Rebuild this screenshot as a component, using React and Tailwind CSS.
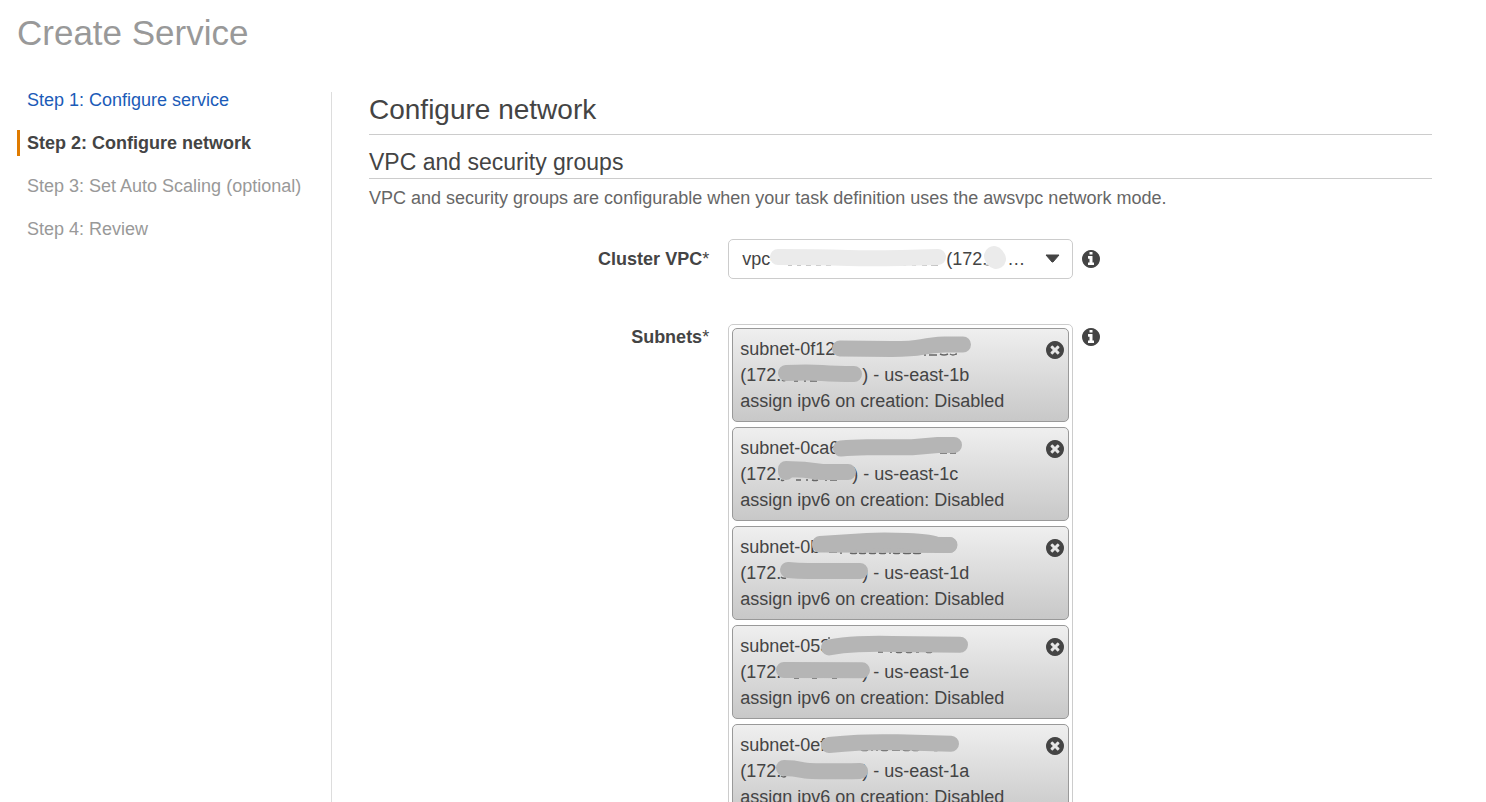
import React from "react";

const steps = [
  { label: "Step 1: Configure service", state: "done" },
  { label: "Step 2: Configure network", state: "current" },
  { label: "Step 3: Set Auto Scaling (optional)", state: "todo" },
  { label: "Step 4: Review", state: "todo" },
];

// `strokes` are the marker lines over the masked parts; `marks` are the glyph edges left visible below them.
const subnets = [
  {
    id: "subnet-0f12",
    zone: "us-east-1b",
    gap: "w-[81px]",
    strokes: ["M108 20.5L160 21Q180 21 190 19T213 16.5L231 16.5", "M54 45Q76 44 90 45T122 46"],
    marks: "M100 26h1.5M192 27h2M197 27h8M208 26q4 2 8 0M218 26q3 2 6 0v1M50 52q2 1.5 4 0M62 53h4M72 53h2M78 53h7",
  },
  {
    id: "subnet-0ca6",
    zone: "us-east-1c",
    gap: "w-[71px]",
    strokes: ["M109 21.5Q120 20.5 135 20.3L180 20.3Q195 19 206 18L222 18", "M54 42V45M54 42Q72 42 90 45L116 45"],
    marks: "M208 26h7M218 26h6M49 53q2 1 3 0M64 53h5M74 53h2M80 53q3 1 6 0M93 53h2M98 53h7",
  },
  {
    id: "subnet-0b",
    zone: "us-east-1d",
    gap: "w-[81px]",
    strokes: ["M88 18.5L217.5 19", "M88 18Q120 16 135 15T175 15T205 19L217 19", "M56 44Q66 45 76 45L128 45"],
    marks: "M97 26h8M108 27h2M118 27q4 1 7 0M127 27q4 1 7 0M137 27q4 1 7 0M147 27q4 1 7 0M157 27h2M161 27q4 1 7 0M171 27q4 1 8 0M181 27q4 1 8 0M49 51q2 2 5 1",
  },
  {
    id: "subnet-053",
    zone: "us-east-1e",
    gap: "w-[81px]",
    strokes: ["M97 22.5Q110 20 126 19.3T160 19L228 19.7", "M52 45L130 45.3"],
    marks: "M97 14v-2M146 27h5M158 27h2M164 27q3 1 6 0M174 27q3 1 6 0M184 27h3M194 27q3 1 6 0M62 53h5M80 53h5M100 53h5",
  },
  {
    id: "subnet-0ef",
    zone: "us-east-1a",
    gap: "w-[81px]",
    strokes: ["M97 21Q112 19.5 126 18.7T166 18.3L219 19.7", "M52 44Q62 44 70 46T128 47"],
    marks: "M129 26q4 1 7 0M139 26h2M144 26h2M149 26q4 1 7 0M160 26h8M171 26q4 1 7 0M180 26q4 1 7 0M194 26h2M201 26q3 1 5 0M49 52q3 2 5 0",
  },
];

const DISC =
  "M1664 896q0 209-103 385.500t-279.500 279.500-385.500 103-385.500-103-279.500-279.500-103-385.500 103-385.500 279.500-279.500 385.500-103 385.500 103 279.500 279.500 103 385.500z";

function InfoIcon() {
  return (
    <svg width="18" height="18" viewBox="128 128 1536 1536" fill="currentColor" fillRule="evenodd" aria-hidden="true">
      <path
        d={
          "M1152 1376v-160q0-14-9-23t-23-9h-96v-512q0-14-9-23t-23-9h-320q-14 0-23 9t-9 23v160q0 14 9 23t23 9h96v320h-96q-14 0-23 9t-9 23v160q0 14 9 23t23 9h448q14 0 23-9t9-23zM1024 480v-160q0-14-9-23t-23-9h-192q-14 0-23 9t-9 23v160q0 14 9 23t23 9h192q14 0 23-9t9-23z" +
          DISC
        }
      />
    </svg>
  );
}

function RemoveIcon() {
  return (
    <svg width="18" height="18" viewBox="128 128 1536 1536" fill="currentColor" fillRule="evenodd" aria-hidden="true">
      <path
        d={
          "M1277 1122q0-26-19-45l-181-181 181-181q19-19 19-45 0-27-19-46l-90-90q-19-19-46-19-26 0-45 19l-181 181-181-181q-19-19-45-19-27 0-46 19l-90 90q-19 19-19 46 0 26 19 45l181 181-181 181q-19 19-19 45 0 27 19 46l90 90q19 19 46 19 26 0 45-19l181-181 181 181q19 19 45 19 27 0 46-19l90-90q19-19 19-46z" +
          DISC
        }
      />
    </svg>
  );
}

function StepItem({ label, state }) {
  if (state === "done") {
    return (
      <li className="border-l-3 border-transparent pl-[7px]">
        <a href="#configure-service" className="text-[#1b5bb8]">{label}</a>
      </li>
    );
  }
  if (state === "current") {
    return (
      <li aria-current="step" className="border-l-3 border-[#e07b00] pl-[7px] font-bold text-[#444]">
        {label}
      </li>
    );
  }
  return <li className="border-l-3 border-transparent pl-[7px] text-[#999]">{label}</li>;
}

function InfoButton({ label }) {
  return (
    <button type="button" aria-label={label} className="block h-[18px] w-[18px] text-[#444]">
      <InfoIcon />
    </button>
  );
}

function SubnetCard({ id, zone, gap, strokes, marks }) {
  return (
    <li className="relative flex justify-between rounded-[5px] border border-[#999] bg-linear-to-b from-[#efefef] to-[#c8c8c8] py-[7px] pr-1 pl-[7px]">
      <div className="leading-[26px]">
        <div>{id}</div>
        <div className="flex">
          <span>(172.</span>
          <span className={gap} />
          <span>) - {zone}</span>
        </div>
        <div>assign ipv6 on creation: Disabled</div>
      </div>
      <svg className="pointer-events-none absolute -top-px -left-px" width="337" height="94" fill="none" aria-hidden="true">
        <path d={marks} stroke="#666" strokeWidth="1.5" />
        {strokes.map((d) => (
          <path key={d} d={d} stroke="#b5b5b5" strokeWidth="16" strokeLinecap="round" strokeLinejoin="round" />
        ))}
      </svg>
      <button type="button" aria-label={"Remove " + id} className="mt-[5px] h-[18px] w-[18px] text-[#444]">
        <RemoveIcon />
      </button>
    </li>
  );
}

export default function App() {
  return (
    <div className="bg-white px-[17px] pt-2 font-['Liberation_Sans',Arial,sans-serif] text-[18px] leading-[26px] text-[#444]">
      <h1 className="text-[35px] leading-[50px] text-[#999]">Create Service</h1>
      <div className="mt-[34px] flex">
        <nav aria-label="Steps" className="w-[315px] shrink-0 border-r border-[#ddd]">
          <ol className="-mt-[5px] flex flex-col gap-[17px]">
            {steps.map((s) => (
              <StepItem key={s.label} {...s} />
            ))}
          </ol>
        </nav>
        <main className="mr-[37px] ml-[37px] min-w-0 grow pb-10">
          <h2 className="border-b border-[#ccc] pb-[6px] text-[28px] leading-[36px]">Configure network</h2>
          <h3 className="mt-3 border-b border-[#ccc] text-[23px] leading-[31px]">VPC and security groups</h3>
          <p className="mt-[6px] text-[#666]">
            VPC and security groups are configurable when your task definition uses the awsvpc network mode.
          </p>
          <div className="mt-7 grid grid-cols-[32%_345px_auto] justify-start">
            <label htmlFor="vpc" className="pt-[7px] text-right font-bold">
              Cluster VPC<span className="font-normal">*</span>
            </label>
            <div className="relative ml-[19px] w-[345px]">
              <select id="vpc" className="h-10 w-full appearance-none rounded-[5px] border border-[#ccc] bg-white px-[13px]">
                <option>{"vpc-" + "\u00a0".repeat(34) + "(172." + "\u00a0".repeat(4) + "…"}</option>
              </select>
              <svg className="pointer-events-none absolute top-0 left-0" width="345" height="40" fill="none" aria-hidden="true">
                <path d="M60 26h4M69 26h4M78 26h5M88 26h5M98 26h5M166 26h4M174 26h4M184 26h4M194 26h5M203 26h7M256 25q3 2 5 1" stroke="#888" strokeWidth="1" />
                <path d="M50 18Q90 18 120 19T210 18" stroke="#ebebeb" strokeWidth="16" strokeLinecap="round" />
                <path d="M266 17L268 20" stroke="#ebebeb" strokeWidth="20" strokeLinecap="round" />
                <path d="M318 16h13l-6 7h-1z" fill="#444" stroke="#444" strokeWidth="1" strokeLinejoin="round" />
              </svg>
            </div>
            <div className="ml-7 pt-[11px]">
              <InfoButton label="About cluster VPC" />
            </div>
          </div>
          <div className="mt-[45px] grid grid-cols-[32%_345px_auto] justify-start">
            <div id="subnets-label" className="text-right font-bold">
              Subnets<span className="font-normal">*</span>
            </div>
            <ul aria-labelledby="subnets-label" className="ml-[19px] flex w-[345px] flex-col gap-[5px] rounded-[5px] border border-[#ccc] p-[3px]">
              {subnets.map((s) => (
                <SubnetCard key={s.id} {...s} />
              ))}
            </ul>
            <div className="ml-7 pt-1">
              <InfoButton label="About subnets" />
            </div>
          </div>
        </main>
      </div>
    </div>
  );
}
